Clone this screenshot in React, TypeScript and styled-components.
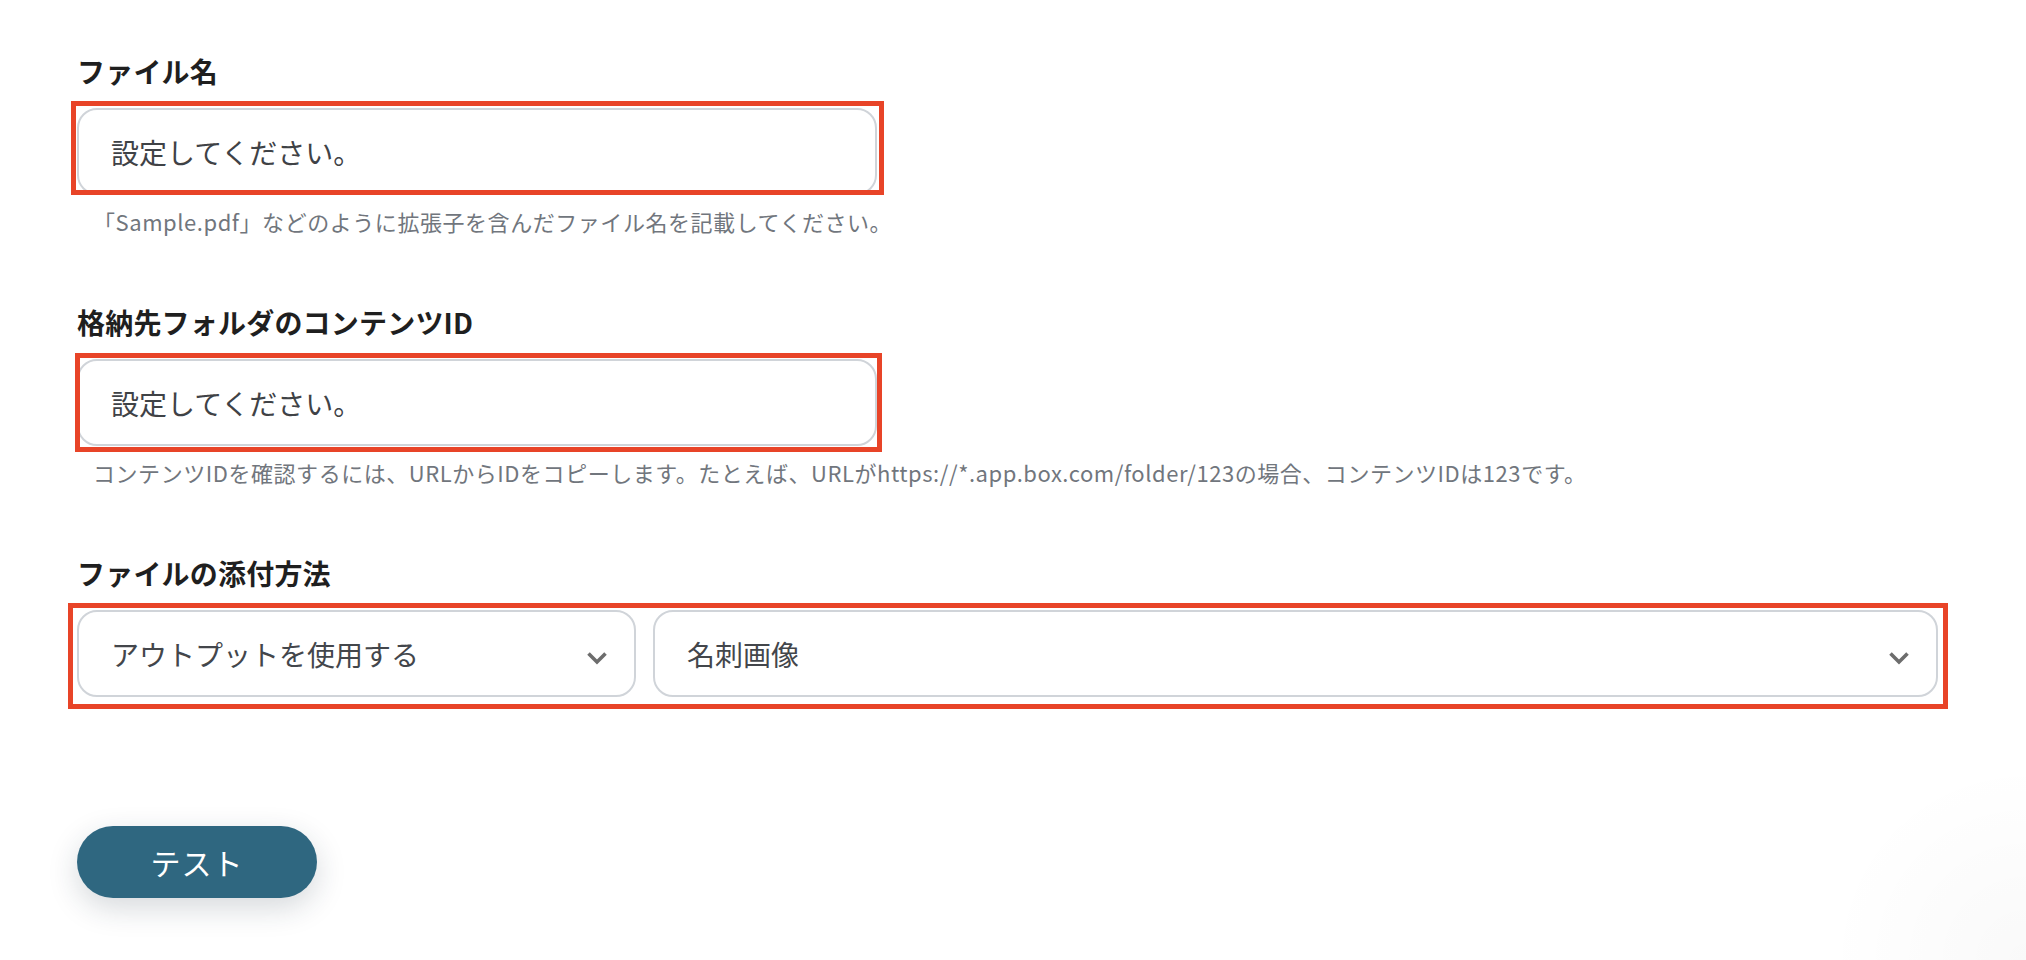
import React from 'react';
import styled, { createGlobalStyle } from 'styled-components';

const GlobalStyle = createGlobalStyle`
  html, body {
    margin: 0;
    padding: 0;
    background: #fff;
  }

  body {
    font-family: "Noto Sans CJK JP", "Noto Sans", sans-serif;
    -webkit-font-smoothing: antialiased;
  }
`;

const Page = styled.div`
  box-sizing: border-box;
  min-height: 100vh;
  padding: 50px 88px 0 77px;
  background: radial-gradient(circle at 100% 100%, rgba(0, 0, 0, 0.025), rgba(0, 0, 0, 0) 200px);
`;

const Field = styled.section`
  display: flex;
  flex-direction: column;

  & + & {
    margin-top: 64px;
  }
`;

const Label = styled.label`
  display: block;
  font-size: 28px;
  line-height: 42px;
  font-weight: 700;
  color: #1f1f1f;
  letter-spacing: 0.2px;
  margin-bottom: 16px;
`;

// the red annotation rectangle drawn over a control
const Highlight = styled.div<{ $inset: string; $fit?: boolean }>`
  position: relative;
  width: ${({ $fit }) => ($fit ? 'fit-content' : 'auto')};

  &::after {
    content: '';
    position: absolute;
    inset: ${({ $inset }) => $inset};
    border: 5px solid #e84428;
    pointer-events: none;
  }
`;

const TextInput = styled.input`
  box-sizing: border-box;
  display: block;
  width: 800px;
  height: 87px;
  padding: 0 32px;
  border: 2px solid #d0d4d9;
  border-radius: 20px;
  background: #fff;
  font-family: inherit;
  font-size: 28px;
  color: #3f4246;
  outline: none;

  &::placeholder {
    color: #3f4246;
    opacity: 1;
  }
`;

const Hint = styled.p`
  margin: 10px 0 0;
  padding-left: 16px;
  font-size: 22px;
  line-height: 32px;
  letter-spacing: 0.55px;
  color: #71767d;
`;

const SelectRow = styled.div`
  display: flex;
  gap: 17px;
`;

const Select = styled.div<{ $width?: number }>`
  box-sizing: border-box;
  display: flex;
  align-items: center;
  justify-content: space-between;
  flex: ${({ $width }) => ($width ? `0 0 ${$width}px` : '1 1 auto')};
  height: 87px;
  padding: 0 26px 0 32px;
  border: 2px solid #d0d4d9;
  border-radius: 20px;
  background: #fff;
  font-size: 28px;
  color: #43464b;
  cursor: pointer;
`;

const Chevron = styled.svg`
  flex: none;
  margin-top: 8px;
`;

const Actions = styled.div`
  margin-top: 129px;
`;

const TestButton = styled.button`
  width: 240px;
  height: 72px;
  border: none;
  border-radius: 36px;
  background: #2f6780;
  color: #fff;
  font-family: inherit;
  font-size: 30px;
  line-height: 1;
  letter-spacing: 1px;
  box-shadow: 0 10px 30px rgba(30, 45, 60, 0.18);
  cursor: pointer;
`;

const ChevronIcon = () => (
    <Chevron width="22" height="14" viewBox="0 0 22 14" fill="none">
        <path d="M2.5 2.5 L11 11 L19.5 2.5" stroke="#6d6d6d" strokeWidth="3.6" strokeLinejoin="miter" />
    </Chevron>
);

const App = () => {
    return (
        <>
            <GlobalStyle />
            <Page>
                <Field>
                    <Label>ファイル名</Label>
                    <Highlight $fit $inset="-7px -7px 0px -6px">
                        <TextInput placeholder="設定してください。" />
                    </Highlight>
                    <Hint>「Sample.pdf」などのように拡張子を含んだファイル名を記載してください。</Hint>
                </Field>

                <Field>
                    <Label>格納先フォルダのコンテンツID</Label>
                    <Highlight $fit $inset="-6px -5px -6px -2px">
                        <TextInput placeholder="設定してください。" />
                    </Highlight>
                    <Hint>
                        コンテンツIDを確認するには、URLからIDをコピーします。たとえば、URLがhttps://*.app.box.com/folder/123の場合、コンテンツIDは123です。
                    </Hint>
                </Field>

                <Field>
                    <Label>ファイルの添付方法</Label>
                    <Highlight $inset="-7px -10px -12px -9px">
                        <SelectRow>
                            <Select $width={559}>
                                <span>アウトプットを使用する</span>
                                <ChevronIcon />
                            </Select>
                            <Select>
                                <span>名刺画像</span>
                                <ChevronIcon />
                            </Select>
                        </SelectRow>
                    </Highlight>
                </Field>

                <Actions>
                    <TestButton>テスト</TestButton>
                </Actions>
            </Page>
        </>
    );
};

export default App;
